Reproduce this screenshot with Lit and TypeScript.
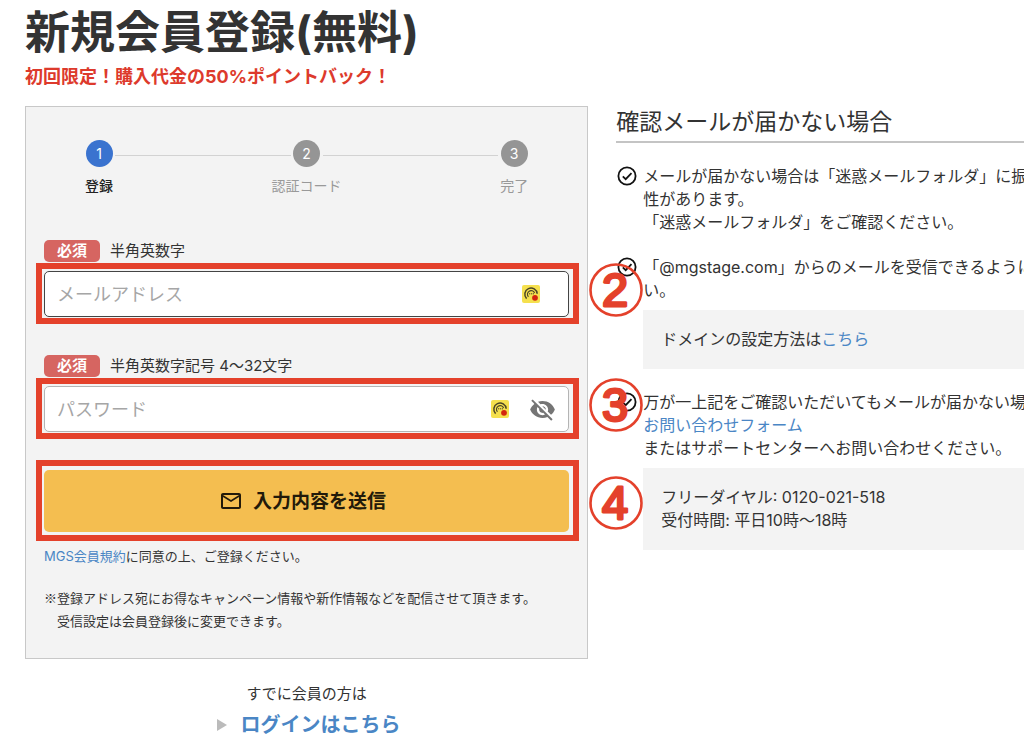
import { LitElement, html, css, svg } from "lit";
import { customElement, property } from "lit/decorators.js";

const RED = css`#e4412b`;

/** Round marker with a bold number, laid over the page. */
@customElement("number-mark")
export class NumberMark extends LitElement {
  @property() value = "";

  static styles = css`
    :host {
      display: block;
      width: 54px;
      height: 54px;
    }
    svg {
      display: block;
    }
    circle {
      fill: none;
      stroke: ${RED};
      stroke-width: 2.6;
    }
    text {
      font-family: "Liberation Sans", sans-serif;
      font-size: 47px;
      font-weight: 400;
      fill: ${RED};
      stroke: ${RED};
      stroke-width: 2.8;
      stroke-linejoin: round;
      text-anchor: middle;
    }
  `;

  render() {
    return html`<svg width="54" height="54" viewBox="0 0 54 54">
      ${svg`<circle cx="27" cy="27" r="25.5"></circle><text x="26" y="43">${this.value}</text>`}
    </svg>`;
  }
}

const checkIcon = html`<svg class="check" width="20" height="20" viewBox="0 0 20 20" aria-hidden="true">
  <circle cx="10" cy="10" r="8.6" fill="none" stroke="#111" stroke-width="1.8" />
  <path d="M5.8 10.4l2.9 2.8 5.8-6" fill="none" stroke="#111" stroke-width="1.8" />
</svg>`;

const managerIcon = html`<svg width="18" height="18" viewBox="0 0 18 18" aria-hidden="true">
  <rect width="18" height="18" rx="2" fill="#f5e04e" />
  <path d="M4.6 13.6A6.2 6.2 0 1 1 15.2 8.8" fill="none" stroke="#4a4426" stroke-width="1.5" />
  <path d="M6.4 11.8A3.7 3.7 0 1 1 12.6 8" fill="none" stroke="#4a4426" stroke-width="1.1" />
  <path d="M7 8.8h5" stroke="#4a4426" stroke-width="1" stroke-dasharray="1.2 .7" />
  <circle cx="13" cy="12.8" r="2.9" fill="#d3260f" />
</svg>`;

const eyeOffIcon = html`<svg width="27" height="27" viewBox="0 0 24 24" aria-hidden="true">
  <path
    fill="#757575"
    d="M12 7c2.76 0 5 2.24 5 5 0 .65-.13 1.26-.36 1.83l2.92 2.92c1.51-1.26 2.7-2.89 3.43-4.75-1.73-4.39-6-7.5-11-7.5-1.4 0-2.74.25-3.98.7l2.16 2.16C10.74 7.13 11.35 7 12 7zM2 4.27l2.28 2.28.46.46C3.08 8.3 1.78 10.02 1 12c1.73 4.39 6 7.5 11 7.5 1.55 0 3.03-.3 4.38-.84l.42.42L19.73 22 21 20.73 3.27 3 2 4.27zM7.53 9.8l1.55 1.55c-.05.21-.08.43-.08.65 0 1.66 1.34 3 3 3 .22 0 .44-.03.65-.08l1.55 1.55c-.67.33-1.41.53-2.2.53-2.76 0-5-2.24-5-5 0-.79.2-1.53.53-2.2zm4.31-.78l3.15 3.15.02-.16c0-1.66-1.34-3-3-3l-.17.01z"
  />
</svg>`;

const mailIcon = html`<svg width="24" height="24" viewBox="0 0 24 24" aria-hidden="true">
  <path
    fill="#221a0a"
    d="M20 4H4c-1.1 0-1.99.9-1.99 2L2 18c0 1.1.9 2 2 2h16c1.1 0 2-.9 2-2V6c0-1.1-.9-2-2-2zm0 14H4V8l8 5 8-5v10zm-8-7L4 6h16l-8 5z"
  />
</svg>`;

@customElement("app-root")
export class AppRoot extends LitElement {
  static styles = css`
    :host {
      display: block;
      overflow: hidden;
      padding-left: 25px;
      background: #fff;
      color: #333;
      font-family: Inter, "Noto Sans CJK JP", sans-serif;
      font-size: 15px;
      line-height: 23px;
    }
    *,
    *::before,
    *::after {
      box-sizing: border-box;
    }
    h1,
    h2,
    p,
    ol,
    ul {
      margin: 0;
      padding: 0;
      list-style: none;
    }
    a {
      color: #4a86c5;
      text-decoration: none;
    }
    h1 {
      font-size: 45px;
      line-height: 66px;
      font-weight: 700;
    }
    .promo {
      font-size: 18px;
      line-height: 22px;
      font-weight: 700;
      color: #dd3a2c;
    }
    .columns {
      display: grid;
      grid-template-columns: 55vw minmax(0, 1fr);
      column-gap: 28px;
      margin-top: 18px;
      align-items: start;
    }
    .panel {
      border: 1px solid #c8c8c8;
      background: #f3f3f3;
      padding: 33px 18px 26px;
    }
    .steps {
      display: grid;
      grid-template-columns: 74px 1fr 74px 1fr 74px;
      margin: 0 18px 43px;
      font-size: 14px;
      line-height: 22px;
      color: #999;
    }
    .step {
      display: flex;
      flex-direction: column;
      align-items: center;
      gap: 8px;
      white-space: nowrap;
    }
    .dot {
      width: 27px;
      height: 27px;
      border-radius: 50%;
      background: #959595;
      color: #fff;
      line-height: 27px;
      text-align: center;
    }
    .current {
      color: #222;
      font-weight: 500;
    }
    .current .dot {
      background: #3a73cf;
      font-weight: 400;
    }
    .rail {
      height: 1px;
      margin: 15px -21px 0;
      background: #d2d2d2;
    }
    .field {
      margin-bottom: 38px;
    }
    .caption {
      display: flex;
      align-items: center;
      gap: 10px;
      margin-bottom: 9px;
      line-height: 22px;
    }
    .badge {
      width: 56px;
      border-radius: 5px;
      background: #d66561;
      color: #fff;
      font-weight: 700;
      font-size: 15px;
      text-align: center;
    }
    .marked {
      position: relative;
    }
    .ring {
      position: absolute;
      inset: -8px -10px -7px -8px;
      border: 6px solid ${RED};
      pointer-events: none;
      z-index: 1;
    }
    .ring.tall {
      inset: -10px -10px -9px -8px;
    }
    .ring number-mark {
      position: absolute;
      left: calc(100% + 16px);
      top: -6px;
    }
    .ring.tall number-mark {
      top: 10px;
    }
    .box {
      display: flex;
      align-items: center;
      height: 46px;
      border: 1px solid #b4b4b4;
      border-radius: 5px;
      background: #fff;
      padding: 0 12px;
    }
    .box.active {
      border-color: #444;
      padding-right: 28px;
    }
    input {
      flex: 1;
      min-width: 0;
      border: 0;
      padding: 0;
      background: none;
      outline: none;
      font: inherit;
      font-size: 18px;
      color: #333;
    }
    input::placeholder {
      color: #a6a6a6;
      opacity: 1;
    }
    .icon-button {
      display: flex;
      border: 0;
      padding: 0;
      margin-left: 20px;
      background: none;
    }
    .submit {
      display: flex;
      align-items: center;
      justify-content: center;
      gap: 10px;
      width: 100%;
      height: 62px;
      border: 0;
      border-radius: 5px;
      padding: 0 8px 0 0;
      background: #f4be50;
      color: #221a0a;
      font: inherit;
      font-size: 19px;
      font-weight: 700;
    }
    .small {
      font-size: 13px;
    }
    .terms {
      margin: 13px 0 18px;
    }
    .note {
      padding-left: 1em;
      text-indent: -1em;
      font-family: "Noto Sans CJK JP", sans-serif;
    }
    .login {
      margin-top: 23px;
      text-align: center;
    }
    .login a {
      display: flex;
      align-items: center;
      justify-content: center;
      gap: 14px;
      margin: 5px 0 0 4px;
      font-size: 20px;
      line-height: 30px;
      font-weight: 700;
    }
    .arrow {
      border-left: 10px solid #bbb;
      border-top: 6px solid transparent;
      border-bottom: 6px solid transparent;
    }
    .side {
      font-size: 16px;
      white-space: nowrap;
      overflow: hidden;
    }
    h2 {
      font-size: 23px;
      line-height: 32px;
      font-weight: 400;
      padding-bottom: 3px;
      border-bottom: 2px solid #c4c4c4;
      margin-bottom: 22px;
    }
    .tips {
      display: grid;
      gap: 22px;
    }
    .tip {
      display: grid;
      grid-template-columns: 27px minmax(0, 1fr);
    }
    .check {
      margin: 1px 0 0 1px;
    }
    .aside {
      margin-top: 8px;
      padding: 18px;
      background: #f3f3f3;
    }
  `;

  private step(n: number, label: string, current = false) {
    return html`<li class="step ${current ? "current" : ""}">
      <span class="dot">${n}</span><span>${label}</span>
    </li>`;
  }

  render() {
    return html`
      <header>
        <h1>新規会員登録(無料)</h1>
        <p class="promo">初回限定！購入代金の50%ポイントバック！</p>
      </header>
      <div class="columns">
        <main>
          <form class="panel" @submit=${(e: Event) => e.preventDefault()}>
            <ol class="steps">
              ${this.step(1, "登録", true)}
              <li class="rail" role="presentation"></li>
              ${this.step(2, "認証コード")}
              <li class="rail" role="presentation"></li>
              ${this.step(3, "完了")}
            </ol>
            <div class="field">
              <label class="caption" for="mail"><span class="badge">必須</span>半角英数字</label>
              <div class="marked">
                <div class="box active">
                  <input id="mail" type="email" placeholder="メールアドレス" />
                  ${managerIcon}
                </div>
                <div class="ring"><number-mark value="2"></number-mark></div>
              </div>
            </div>
            <div class="field">
              <label class="caption" for="pass"><span class="badge">必須</span>半角英数字記号 4〜32文字</label>
              <div class="marked">
                <div class="box">
                  <input id="pass" type="password" placeholder="パスワード" />
                  ${managerIcon}
                  <button class="icon-button" type="button" aria-label="パスワードを表示">${eyeOffIcon}</button>
                </div>
                <div class="ring"><number-mark value="3"></number-mark></div>
              </div>
            </div>
            <div class="marked">
              <button class="submit" type="submit">${mailIcon}<span>入力内容を送信</span></button>
              <div class="ring tall"><number-mark value="4"></number-mark></div>
            </div>
            <p class="small terms"><a href="#terms">MGS会員規約</a>に同意の上、ご登録ください。</p>
            <p class="small note">※登録アドレス宛にお得なキャンペーン情報や新作情報などを配信させて頂きます。<br />受信設定は会員登録後に変更できます。</p>
          </form>
          <div class="login">
            <p>すでに会員の方は</p>
            <a href="#login"><span class="arrow"></span>ログインはこちら</a>
          </div>
        </main>
        <aside class="side">
          <h2>確認メールが届かない場合</h2>
          <ul class="tips">
            <li class="tip">
              ${checkIcon}
              <p>メールが届かない場合は「迷惑メールフォルダ」に振り<br />性があります。<br />「迷惑メールフォルダ」をご確認ください。</p>
            </li>
            <li class="tip">
              ${checkIcon}
              <div>
                <p>「@mgstage.com」からのメールを受信できるように<br />い。</p>
                <p class="aside">ドメインの設定方法は<a href="#domain">こちら</a></p>
              </div>
            </li>
            <li class="tip">
              ${checkIcon}
              <div>
                <p>万が一上記をご確認いただいてもメールが届かない場合<br /><a href="#contact">お問い合わせフォーム</a><br />またはサポートセンターへお問い合わせください。</p>
                <p class="aside">フリーダイヤル: 0120-021-518<br />受付時間: 平日10時〜18時</p>
              </div>
            </li>
          </ul>
        </aside>
      </div>
    `;
  }
}
